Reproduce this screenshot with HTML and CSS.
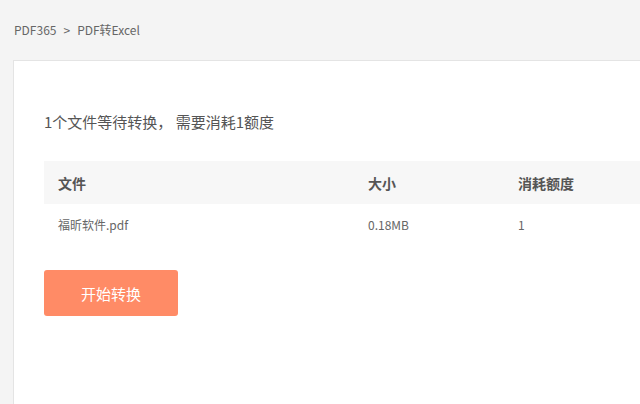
FILE: index.html
```html
<!DOCTYPE html>
<html lang="zh-CN">
<head>
<meta charset="utf-8">
<title>PDF转Excel</title>
<link rel="stylesheet" href="styles.css">
</head>
<body>
<div class="crumb">PDF365<span class="sep">&gt;</span>PDF转Excel</div>
<div class="card">
  <p class="summary">1个文件等待转换， 需要消耗1额度</p>
  <div class="table">
    <div class="row head">
      <div class="c1">文件</div>
      <div class="c2">大小</div>
      <div class="c3">消耗额度</div>
    </div>
    <div class="row body-row">
      <div class="c1">福昕软件.pdf</div>
      <div class="c2">0.18MB</div>
      <div class="c3">1</div>
    </div>
  </div>
  <button class="start">开始转换</button>
</div>
</body>
</html>
```
FILE: styles.css
```css
html, body {
  margin: 0;
  height: 100%;
}
body {
  background: #f4f4f4;
  font-family: "Microsoft YaHei", "Noto Sans CJK SC", sans-serif;
  color: #555;
  display: flex;
  flex-direction: column;
  overflow: hidden;
}
.crumb {
  height: 60px;
  line-height: 60px;
  padding-left: 14px;
  font-size: 12px;
  color: #666;
}
.crumb .sep {
  margin: 0 7px;
}
.card {
  flex: 1;
  margin-left: 13px;
  background: #fff;
  border-top: 1px solid #e4e4e4;
  border-left: 1px solid #e4e4e4;
  padding: 51px 0 0 30px;
}
.summary {
  margin: 0;
  font-size: 15px;
  line-height: 20px;
  color: #555;
}
.table {
  margin-top: 29px;
}
.row {
  display: flex;
  align-items: center;
}
.row > div {
  padding-left: 14px;
  box-sizing: border-box;
}
.c1 { width: 310px; }
.c2 { width: 150px; }
.c3 { flex: 1; }
.head {
  height: 43px;
  background: #f7f7f7;
  font-size: 14px;
  font-weight: bold;
  color: #555;
}
.body-row {
  height: 41px;
  font-size: 12px;
  color: #666;
}
.start {
  margin-top: 25px;
  width: 134px;
  height: 46px;
  border: none;
  border-radius: 3px;
  background: #ff8b66;
  color: #fff;
  font-family: inherit;
  font-size: 15px;
  padding: 0;
}
```
